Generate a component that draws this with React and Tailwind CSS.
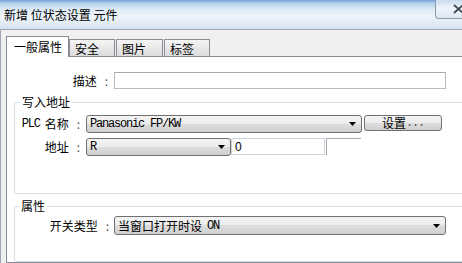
import React from 'react';

const cjk = { fontFamily: '"Noto Sans CJK SC", "Noto Sans", sans-serif' };
const mono = 'font-["Liberation_Mono","Noto_Sans_CJK_SC",monospace] text-[12px] tracking-[-1.2px]';

function Arrow() {
  return (
    <svg width="7" height="4" viewBox="0 0 7 4" className="shrink-0">
      <path d="M0 0h7L3.5 4z" fill="#000" />
    </svg>
  );
}

function Combo({ className, children }) {
  return (
    <div className={'flex items-center justify-between rounded-[3px] border border-[#707070] bg-[linear-gradient(to_bottom,#f4f4f4_0%,#ececec_50%,#dddddd_50%,#d0d0d0_100%)] pl-[3px] pr-[5px] ' + className}>
      <div className="flex items-center leading-[14px] whitespace-nowrap">{children}</div>
      <Arrow />
    </div>
  );
}

function Tab({ label, active, className }) {
  if (active) {
    return (
      <div className={'relative z-10 -mb-px h-[21px] border-x border-t border-[#898c95] bg-white pl-[7px] pt-[3px] text-[12px] leading-[14px] ' + className}>
        {label}
      </div>
    );
  }
  return (
    <div className={'h-[17px] border-x border-t border-[#898c95] bg-[linear-gradient(to_bottom,#f5f5f5,#dcdcdc)] pl-[5px] pt-[2px] text-[12px] leading-[14px] ' + className}>
      {label}
    </div>
  );
}

export default function App() {
  return (
    <div className="flex h-[263px] w-[462px] flex-col overflow-hidden bg-[#f0f0f0] text-black" style={cjk}>
      {/* title bar */}
      <div className="relative flex h-[29px] shrink-0 items-center bg-[linear-gradient(to_bottom,#6f9fd6_0px,#b4cfec_3px,#e1ecf7_10px,#eef4fa_17px,#d6e3f1_29px)] pl-[4px] text-[12px] leading-[14px]">
        <span className="whitespace-pre">新增 位状态设置 元件</span>
        <div className="absolute right-[-8px] top-0 flex h-[19px] w-[35px] items-center justify-end rounded-bl-[4px] border-b border-l border-[#8a99ad] bg-[linear-gradient(to_bottom,#c9dcef,#eef4fa_45%,#dfe9f4)] pr-[6px]">
          <svg width="11" height="10" viewBox="0 0 11 10">
            <path d="M1 1l9 8M10 1L1 9" stroke="#3c4756" strokeWidth="1.8" />
          </svg>
        </div>
      </div>

      <div className="flex flex-1">
        {/* window frame */}
        <div className="w-[4px] bg-[linear-gradient(to_bottom,#c6d6e7_0px,#8e9caa_45px,#1a1a1a_75px,#000_100%)]" />
        <div className="w-px bg-[#e4ebf2]" />

        {/* dialog body */}
        <div className="flex flex-1 flex-col border-l border-t border-[#9aa6b4] bg-[#f0f0f0] pl-[5px] pt-[6px]">
          <div className="flex items-end">
            <Tab label="一般属性" active className="w-[63px]" />
            <Tab label="安全" className="w-[46px]" />
            <Tab label="图片" className="ml-px w-[47px]" />
            <Tab label="标签" className="ml-px w-[46px]" />
          </div>

          <div className="flex w-[480px] flex-1 flex-col border border-[#898c95] bg-white text-[12px] leading-[14px]">
            {/* 描述 */}
            <div className="mt-[15px] flex items-center">
              <div className="flex w-[101px] justify-end">
                <span>描述</span>
                <span className="ml-[8px] text-[#555]">:</span>
              </div>
              <div className="ml-[6px] h-[17px] w-[332px] border border-[#b9bdc4] border-t-[#a5a9b1]" />
            </div>

            {/* 写入地址 */}
            <fieldset className="ml-[7px] mt-[6px] w-[462px] rounded-[3px] border border-[#d5dfe5] pb-[37px]">
              <legend className="ml-[5px] px-[2px] leading-[14px]">写入地址</legend>
              <div className="mt-[6px] flex items-start">
                <div className="flex h-[18px] w-[65px] items-center justify-end">
                  <span className={mono}>PLC</span>
                  <span className="ml-[5px]">名称</span>
                  <span className="ml-[8px] text-[#555]">:</span>
                </div>
                <Combo className="ml-[6px] h-[18px] w-[276px]">
                  <span className={mono}>Panasonic FP/KW</span>
                </Combo>
                <div className="ml-[2px] flex h-[16px] w-[78px] items-center justify-center rounded-[3px] border border-[#707070] bg-[linear-gradient(to_bottom,#f4f4f4_0%,#ececec_50%,#dddddd_50%,#d0d0d0_100%)]">
                  <span>设置</span>
                  <span className={mono + ' text-[#555]'}>...</span>
                </div>
              </div>
              <div className="mt-[5px] flex items-start">
                <div className="flex h-[18px] w-[65px] items-center justify-end">
                  <span>地址</span>
                  <span className="ml-[8px] text-[#555]">:</span>
                </div>
                <Combo className="ml-[6px] h-[18px] w-[145px]">
                  <span className={mono}>R</span>
                </Combo>
                <div className="flex h-[17px] w-[94px] items-center border border-[#cfd3d9] pl-[3px] font-['Liberation_Sans',sans-serif] text-[12px]">
                  0
                </div>
                <div className="ml-px h-[17px] w-[35px] border-l border-t border-[#a8acb2]" />
              </div>
            </fieldset>

            {/* 属性 */}
            <fieldset className="ml-[7px] mt-[5px] w-[462px] flex-1 rounded-[3px] border border-[#d5dfe5]">
              <legend className="ml-[4px] px-[2px] leading-[14px]">属性</legend>
              <div className="mt-[3px] flex items-center">
                <div className="flex w-[94px] justify-end">
                  <span>开关类型</span>
                  <span className="ml-[8px] text-[#555]">:</span>
                </div>
                <Combo className="ml-[5px] h-[19px] w-[332px]">
                  <span>当窗口打开时设</span>
                  <span className={mono + ' ml-[5px]'}>ON</span>
                </Combo>
              </div>
            </fieldset>
          </div>
        </div>
      </div>
    </div>
  );
}
